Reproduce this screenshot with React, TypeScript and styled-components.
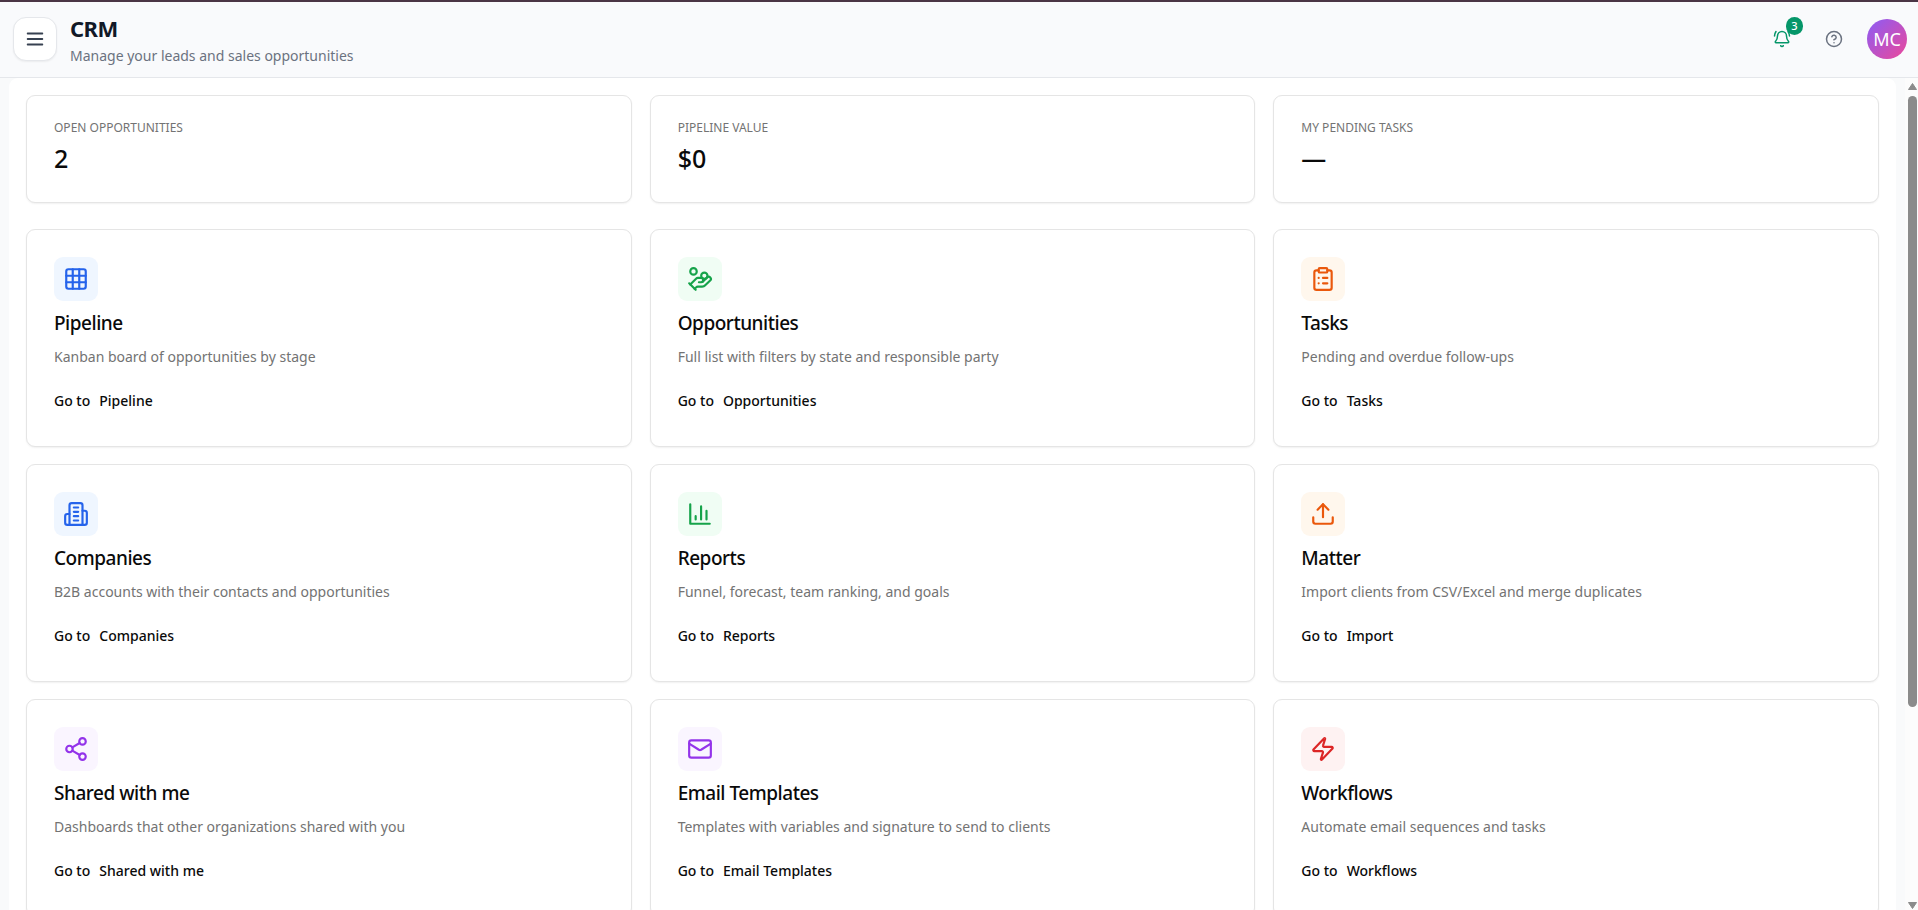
import React from 'react';
import styled, { createGlobalStyle } from 'styled-components';
import {
  CircleHelp, Grid3x3, HandCoins, ClipboardList, Upload, Share2, Mail, Zap,
} from 'lucide-react';

const Global = createGlobalStyle`
  *, *::before, *::after { box-sizing: border-box; }
  body {
    margin: 0;
    background: #f9fafb;
    color: #0a0a0a;
    font-family: "Noto Sans", "Open Sans", sans-serif;
  }
  button { font-family: inherit; }
  h1, h2, p, dl, dt, dd { margin: 0; }
`;

const Shell = styled.div`
  display: flex;
  flex-direction: column;
  height: 100vh;
  border-top: 2px solid #4a3545;
`;

const Header = styled.header`
  display: flex;
  align-items: center;
  justify-content: space-between;
  flex: none;
  height: 76px;
  padding: 0 11px 1px 13px;
  background: #f9fafc;
  border-bottom: 1px solid #e5e7eb;
`;

const Heading = styled.div`
  display: flex;
  align-items: center;
  gap: 13px;
`;

const HeadingText = styled.div`
  padding-top: 5px;
`;

const MenuButton = styled.button`
  display: grid;
  place-items: center;
  width: 44px;
  height: 44px;
  padding: 0;
  color: #374151;
  background: #fff;
  border: 1px solid #e5e7eb;
  border-radius: 13px;
  box-shadow: 0 1px 2px rgba(0, 0, 0, 0.06);
`;

const PageTitle = styled.h1`
  font-size: 22px;
  line-height: 28px;
  font-weight: 700;
  letter-spacing: -0.025em;
  color: #111827;
`;

const Subtitle = styled.p`
  margin-top: 1px;
  font-size: 14px;
  line-height: 26px;
  color: #6b7280;
`;

const Actions = styled.div`
  display: flex;
  align-items: center;
`;

const IconButton = styled.button<{ $tone: string }>`
  position: relative;
  display: grid;
  place-items: center;
  width: 36px;
  height: 36px;
  padding: 0;
  color: ${(p) => p.$tone};
  background: none;
  border: 0;
  & + & { margin-left: 16px; }
`;

const Badge = styled.span`
  position: absolute;
  top: -4px;
  right: -3px;
  width: 17px;
  height: 18px;
  border-radius: 9px;
  background: #059669;
  color: #fff;
  font-size: 11px;
  line-height: 18px;
  font-weight: 500;
  text-align: center;
`;

const Avatar = styled.button`
  width: 40px;
  height: 40px;
  margin-left: 15px;
  padding: 0;
  border: 0;
  border-radius: 50%;
  color: #fff;
  background: linear-gradient(135deg, #8b5cf6, #ec4899);
  font-size: 18px;
  line-height: 40px;
`;

const Viewport = styled.div`
  display: flex;
  flex: 1;
  min-height: 0;
`;

const Scroller = styled.main`
  flex: 1;
  padding: 0 9px;
  overflow-y: auto;
  scrollbar-width: none;
`;

const Panel = styled.div`
  padding: 17px;
  background: #fff;
  border-radius: 9px;
`;

const Stats = styled.dl`
  display: grid;
  grid-template-columns: repeat(3, 1fr);
  gap: 18px;
  margin-bottom: 26px;
`;

const Modules = styled.div`
  display: grid;
  grid-template-columns: repeat(3, 1fr);
  gap: 17px 18px;
`;

const Card = styled.div`
  padding: 27px 27px 34px;
  background: #fff;
  border: 1px solid #e5e5e5;
  border-radius: 9px;
  box-shadow: 0 1px 2px rgba(0, 0, 0, 0.06);
`;

const StatCard = styled(Card)`
  padding: 23px 27px 26px;
`;

const StatLabel = styled.dt`
  font-size: 12px;
  line-height: 18px;
  text-transform: uppercase;
  color: #737373;
`;

const StatValue = styled.dd`
  margin-top: 4px;
  font-size: 25px;
  line-height: 35px;
  font-weight: 500;
`;

const Tile = styled.div<{ $ink: string; $tint: string }>`
  display: grid;
  place-items: center;
  width: 44px;
  height: 44px;
  border-radius: 9px;
  color: ${(p) => p.$ink};
  background: ${(p) => p.$tint};
`;

const CardTitle = styled.h2`
  margin-top: 8px;
  font-size: 19px;
  line-height: 28px;
  font-weight: 500;
  letter-spacing: -0.025em;
`;

const CardText = styled.p`
  margin-top: 9px;
  font-size: 14px;
  line-height: 22px;
  color: #737373;
`;

const CardLink = styled.a`
  display: inline-flex;
  gap: 9px;
  margin-top: 22px;
  font-size: 14px;
  line-height: 22px;
  font-weight: 500;
  color: #0a0a0a;
  text-decoration: none;
`;

const ScrollRail = styled.div`
  display: flex;
  flex-direction: column;
  align-items: center;
  flex: none;
  width: 13px;
  padding: 5px 0 1px 2px;
  background: #fcfcfc;
`;

const Track = styled.div`
  flex: 1;
  width: 9px;
  margin: 6px 0;
`;

const Thumb = styled.div`
  height: 76.4%;
  border-radius: 5px;
  background: #8b8b8b;
`;

type IconProps = { size?: number };

const Svg = ({ size = 24, children }: IconProps & { children: React.ReactNode }) => (
  <svg width={size} height={size} viewBox="0 0 24 24" fill="none" stroke="currentColor"
    strokeWidth="2" strokeLinecap="round" strokeLinejoin="round" aria-hidden="true">
    {children}
  </svg>
);

const MenuLines = () => (
  <Svg size={22}>
    <path d="M4 6h16M4 12h16M4 18h16" />
  </Svg>
);

const BellRinging = () => (
  <Svg size={18}>
    <path d="M10.268 21a2 2 0 0 0 3.464 0" />
    <path d="M22 8c0-2.3-.8-4.3-2-6" />
    <path d="M3.262 15.326A1 1 0 0 0 4 17h16a1 1 0 0 0 .74-1.673C19.41 13.956 18 12.499 18 8A6 6 0 0 0 6 8c0 4.499-1.411 5.956-2.738 7.326" />
    <path d="M4 2C2.8 3.7 2 5.7 2 8" />
  </Svg>
);

const Offices = (p: IconProps) => (
  <Svg {...p}>
    <path d="M6 22V4a2 2 0 0 1 2-2h8a2 2 0 0 1 2 2v18Z" />
    <path d="M6 12H4a2 2 0 0 0-2 2v6a2 2 0 0 0 2 2h2" />
    <path d="M18 9h2a2 2 0 0 1 2 2v9a2 2 0 0 1-2 2h-2" />
    <path d="M10 6h4M10 10h4M10 14h4M10 18h4" />
  </Svg>
);

const BarChart = (p: IconProps) => (
  <Svg {...p}>
    <path d="M3 3v18h18" />
    <path d="M8 17v-3M13 17V5M18 17V9" />
  </Svg>
);

const blue = ['#2563eb', '#eff6ff'];
const green = ['#16a34a', '#f0fdf4'];
const orange = ['#ea580c', '#fff7ed'];
const purple = ['#9333ea', '#faf5ff'];
const red = ['#dc2626', '#fef2f2'];

const stats = [
  ['Open opportunities', '2'],
  ['Pipeline value', '$0'],
  ['My pending tasks', '—'],
];

const modules = [
  { title: 'Pipeline', text: 'Kanban board of opportunities by stage', icon: Grid3x3, tone: blue },
  { title: 'Opportunities', text: 'Full list with filters by state and responsible party', icon: HandCoins, tone: green },
  { title: 'Tasks', text: 'Pending and overdue follow-ups', icon: ClipboardList, tone: orange },
  { title: 'Companies', text: 'B2B accounts with their contacts and opportunities', icon: Offices, tone: blue },
  { title: 'Reports', text: 'Funnel, forecast, team ranking, and goals', icon: BarChart, tone: green },
  { title: 'Matter', text: 'Import clients from CSV/Excel and merge duplicates', icon: Upload, tone: orange, link: 'Import' },
  { title: 'Shared with me', text: 'Dashboards that other organizations shared with you', icon: Share2, tone: purple },
  { title: 'Email Templates', text: 'Templates with variables and signature to send to clients', icon: Mail, tone: purple },
  { title: 'Workflows', text: 'Automate email sequences and tasks', icon: Zap, tone: red },
];

export default function App() {
  return (
    <Shell>
      <Global />
      <Header>
        <Heading>
          <MenuButton aria-label="Menu"><MenuLines /></MenuButton>
          <HeadingText>
            <PageTitle>CRM</PageTitle>
            <Subtitle>Manage your leads and sales opportunities</Subtitle>
          </HeadingText>
        </Heading>
        <Actions>
          <IconButton $tone="#059669" aria-label="Notifications">
            <BellRinging />
            <Badge>3</Badge>
          </IconButton>
          <IconButton $tone="#6b7280" aria-label="Help"><CircleHelp size={18} /></IconButton>
          <Avatar aria-label="Account">MC</Avatar>
        </Actions>
      </Header>
      <Viewport>
        <Scroller>
          <Panel>
            <Stats>
              {stats.map(([label, value]) => (
                <StatCard key={label}>
                  <StatLabel>{label}</StatLabel>
                  <StatValue>{value}</StatValue>
                </StatCard>
              ))}
            </Stats>
            <Modules>
              {modules.map(({ title, text, icon: Icon, tone, link }) => (
                <Card key={title}>
                  <Tile $ink={tone[0]} $tint={tone[1]}><Icon size={26} /></Tile>
                  <CardTitle>{title}</CardTitle>
                  <CardText>{text}</CardText>
                  <CardLink href="#"><span>Go to</span><span>{link ?? title}</span></CardLink>
                </Card>
              ))}
            </Modules>
          </Panel>
        </Scroller>
        <ScrollRail aria-hidden="true">
          <svg width="9" height="7" viewBox="0 0 9 7"><path d="M4.5 0.5L8.5 6.5H0.5Z" fill="#8b8b8b" stroke="#8b8b8b" strokeLinejoin="round" /></svg>
          <Track><Thumb /></Track>
          <svg width="9" height="7" viewBox="0 0 9 7"><path d="M4.5 6.5L8.5 0.5H0.5Z" fill="#8b8b8b" stroke="#8b8b8b" strokeLinejoin="round" /></svg>
        </ScrollRail>
      </Viewport>
    </Shell>
  );
}
